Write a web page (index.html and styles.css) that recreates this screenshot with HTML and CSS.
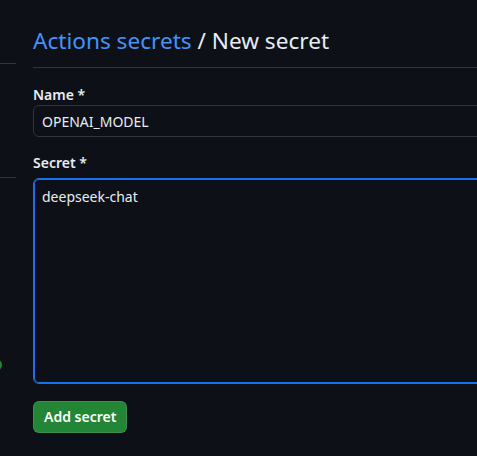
FILE: index.html
```html
<!DOCTYPE html>
<html lang="en">
<head>
<meta charset="utf-8">
<title>New secret</title>
<link rel="stylesheet" href="styles.css">
</head>
<body>
<div class="page">
  <nav class="sidebar">
    <div class="nav-section nav-first"></div>
    <div class="nav-section nav-second"></div>
    <div class="nav-tail"><span class="status-dot"></span></div>
  </nav>
  <main class="main">
    <h1 class="subhead"><a class="subhead-link" href="#">Actions secrets</a> / New secret</h1>
    <form class="secret-form">
      <div class="form-group">
        <label class="form-label">Name *</label>
        <input class="form-control" type="text" value="OPENAI_MODEL">
      </div>
      <div class="form-group form-group-secret">
        <label class="form-label">Secret *</label>
        <textarea class="form-control form-textarea">deepseek-chat</textarea>
      </div>
      <button class="btn-primary" type="button">Add secret</button>
    </form>
  </main>
</div>
</body>
</html>
```
FILE: styles.css
```css
html, body {
  margin: 0;
  padding: 0;
  background: #0d1117;
  overflow: hidden;
}
body {
  font-family: "Noto Sans", "Open Sans", "Liberation Sans", sans-serif;
  color: #e6edf3;
  font-size: 14px;
  line-height: 20px;
}
.page {
  display: flex;
  gap: 17px;
  width: 477px;
  height: 456px;
}
.sidebar {
  flex: none;
  width: 16px;
  overflow: hidden;
  display: flex;
  flex-direction: column;
}
.nav-section {
  border-bottom: 1px solid #30363d;
}
.nav-first { height: 63px; }
.nav-second { height: 113px; }
.nav-tail {
  padding-top: 181px;
}
.status-dot {
  display: block;
  width: 12px;
  height: 12px;
  margin-left: -10px;
  border-radius: 50%;
  background: #238636;
}
.main {
  flex: 1;
  min-width: 0;
  overflow: hidden;
  padding-top: 25px;
}
.subhead {
  margin: 0;
  font-size: 22.6px;
  font-weight: 400;
  line-height: 32px;
  padding-bottom: 10px;
  border-bottom: 1px solid #30363d;
  color: #e6edf3;
  white-space: nowrap;
}
.subhead-link {
  color: #4493f8;
  text-decoration: none;
}
.secret-form {
  padding-top: 17px;
}
.form-group {
  display: flex;
  flex-direction: column;
  align-items: flex-start;
}
.form-label {
  font-weight: 600;
  font-size: 14px;
  line-height: 20px;
  color: #e6edf3;
}
.form-control {
  box-sizing: border-box;
  width: calc(100% + 12px);
  height: 32px;
  margin: 0;
  padding: 0 8px;
  background: #0d1117;
  border: 1px solid #30363d;
  border-radius: 6px;
  color: #e6edf3;
  font-family: inherit;
  font-size: 14px;
  line-height: 20px;
  outline: none;
}
.form-group-secret {
  margin-top: 16px;
}
.form-group-secret .form-label {
  margin-bottom: 5px;
}
.form-textarea {
  height: 206px;
  padding: 8px 8px;
  resize: none;
  border-color: #1f6feb;
  box-shadow: inset 0 0 0 1px #1f6feb;
}
.btn-primary {
  margin-top: 17px;
  height: 32px;
  padding: 0 10px;
  background: #238636;
  border: 1px solid rgba(240, 246, 252, 0.1);
  border-radius: 6px;
  color: #ffffff;
  font-family: inherit;
  font-size: 14px;
  font-weight: 600;
  line-height: 20px;
  cursor: pointer;
}
```
